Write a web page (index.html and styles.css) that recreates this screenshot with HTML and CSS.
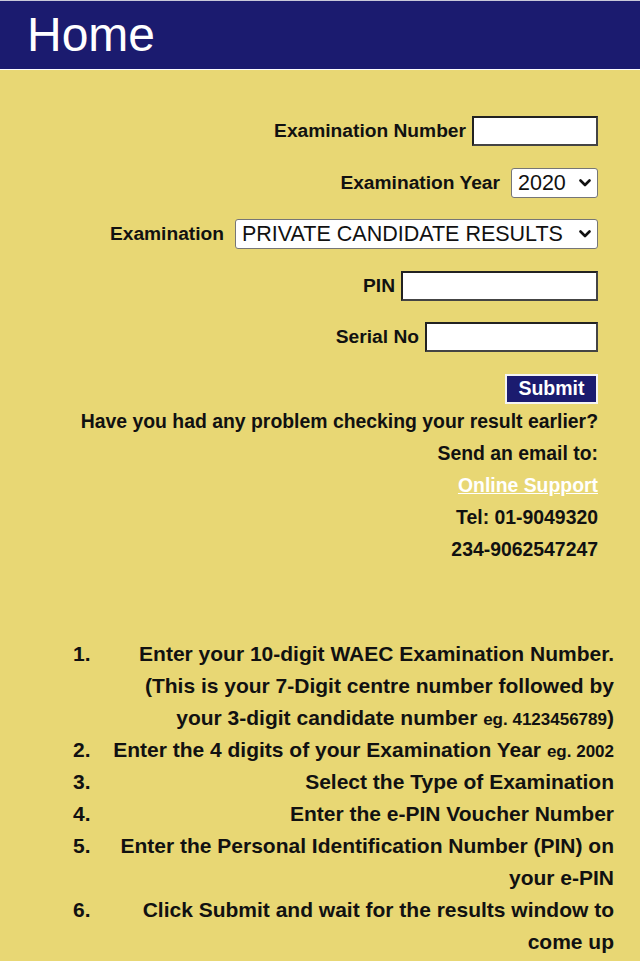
FILE: index.html
```html
<!DOCTYPE html>
<html lang="en">
<head>
<meta charset="utf-8">
<title>Home</title>
<link rel="stylesheet" href="styles.css">
</head>
<body>
<header class="topbar">
  <h1 class="title">Home</h1>
</header>
<main class="content">
  <form class="form">
    <div class="row">
      <label class="label" for="exam-no">Examination Number</label>
      <input class="field field-num" id="exam-no" type="text">
    </div>
    <div class="row">
      <label class="label label-sel" for="exam-year">Examination Year</label>
      <span class="select-wrap">
        <select class="select select-year" id="exam-year">
          <option>2020</option>
        </select>
        <svg class="chevron" viewBox="0 0 12 8" width="12" height="8" aria-hidden="true"><path d="M1.5 1.5 L6 6 L10.5 1.5" fill="none" stroke="#111" stroke-width="2.6" stroke-linecap="round" stroke-linejoin="round"/></svg>
      </span>
    </div>
    <div class="row">
      <label class="label label-sel" for="exam-type">Examination</label>
      <span class="select-wrap">
        <select class="select select-type" id="exam-type">
          <option>PRIVATE CANDIDATE RESULTS</option>
        </select>
        <svg class="chevron" viewBox="0 0 12 8" width="12" height="8" aria-hidden="true"><path d="M1.5 1.5 L6 6 L10.5 1.5" fill="none" stroke="#111" stroke-width="2.6" stroke-linecap="round" stroke-linejoin="round"/></svg>
      </span>
    </div>
    <div class="row">
      <label class="label" for="pin">PIN</label>
      <input class="field field-pin" id="pin" type="text">
    </div>
    <div class="row">
      <label class="label" for="serial">Serial No</label>
      <input class="field field-serial" id="serial" type="text">
    </div>
    <div class="row row-submit">
      <button class="submit" type="button">Submit</button>
    </div>
  </form>
  <div class="help">
    <p>Have you had any problem checking your result earlier?</p>
    <p>Send an email to:</p>
    <p><a class="link" href="#">Online Support</a></p>
    <p>Tel: 01-9049320</p>
    <p>234-9062547247</p>
  </div>
  <ol class="steps">
    <li><span class="step-text">Enter your 10-digit WAEC Examination Number.<br>(This is your 7-Digit centre number followed by<br>your 3-digit candidate number <span class="eg">eg. 4123456789</span>)</span></li>
    <li><span class="step-text">Enter the 4 digits of your Examination Year <span class="eg">eg. 2002</span></span></li>
    <li><span class="step-text">Select the Type of Examination</span></li>
    <li><span class="step-text">Enter the e-PIN Voucher Number</span></li>
    <li><span class="step-text">Enter the Personal Identification Number (PIN) on<br>your e-PIN</span></li>
    <li><span class="step-text">Click Submit and wait for the results window to<br>come up</span></li>
  </ol>
</main>
</body>
</html>
```
FILE: styles.css
```css
html, body {
  margin: 0;
  padding: 0;
}
body {
  background: #e8d774;
  font-family: "Liberation Sans", Arial, sans-serif;
  color: #111;
  width: 640px;
  height: 961px;
  overflow: hidden;
}
.topbar {
  background: #1b1b6f;
  border-top: 1px solid #c9c9d9;
  border-bottom: 1px solid #ffffff;
  display: flex;
  align-items: center;
  padding-left: 27px;
  box-sizing: border-box;
  height: 70px;
}
.title {
  margin: 0;
  font-size: 48px;
  font-weight: normal;
  line-height: 1;
  color: #fff;
}
.content {
  padding: 46px 26px 0 0;
}
.form {
  margin: 0;
  padding-right: 16px;
}
.row {
  display: flex;
  justify-content: flex-end;
  align-items: center;
  height: 30px;
  margin-bottom: 21.5px;
  gap: 6px;
}
.row-submit {
  margin-bottom: 0;
}
.label {
  font-size: 19.2px;
  font-weight: bold;
}
.label-sel {
  margin-right: 5px;
}
.field {
  box-sizing: border-box;
  height: 30px;
  border: 2px solid #222;
  border-right-color: #444;
  border-bottom-color: #444;
  background: #fff;
  padding: 0 3px;
  margin: 0;
  font-size: 18px;
}
.field-num { width: 126px; }
.field-pin { width: 197px; }
.field-serial { width: 173px; }
.select-wrap {
  position: relative;
  display: inline-block;
  height: 30px;
}
.select {
  box-sizing: border-box;
  height: 30px;
  appearance: none;
  -webkit-appearance: none;
  font-family: "Liberation Sans", Arial, sans-serif;
  font-size: 21.5px;
  color: #111;
  background: #fff;
  border: 1px solid #767676;
  border-radius: 3px;
  margin: 0;
  padding: 0 24px 0 6px;
  display: block;
}
.chevron {
  position: absolute;
  right: 7px;
  top: 11px;
  pointer-events: none;
}
.select-year { width: 87px; }
.select-type { width: 363px; }
.submit {
  box-sizing: border-box;
  width: 93px;
  height: 30px;
  padding: 0;
  margin: 0;
  background: #1b1b6f;
  color: #fff;
  border: 2px solid #f4f4f4;
  font-family: "Liberation Sans", Arial, sans-serif;
  font-size: 19.5px;
  font-weight: bold;
}
.help {
  margin-top: 1px;
  padding-right: 16px;
  text-align: right;
  font-size: 19.4px;
  font-weight: bold;
  line-height: 32.2px;
}
.help p {
  margin: 0;
}
.link {
  color: #fff;
  text-decoration: underline;
}
.steps {
  margin: 72px 0 0 0;
  padding: 0 0 0 73px;
  list-style: none;
  counter-reset: step;
  font-size: 21px;
  font-weight: bold;
  line-height: 32.1px;
}
.steps li {
  counter-increment: step;
  display: flex;
}
.steps li::before {
  content: counter(step) ".";
  flex: 0 0 39px;
  text-align: left;
}
.step-text {
  flex: 1;
  text-align: right;
}
.eg {
  font-size: 17px;
  line-height: 1;
}
```
